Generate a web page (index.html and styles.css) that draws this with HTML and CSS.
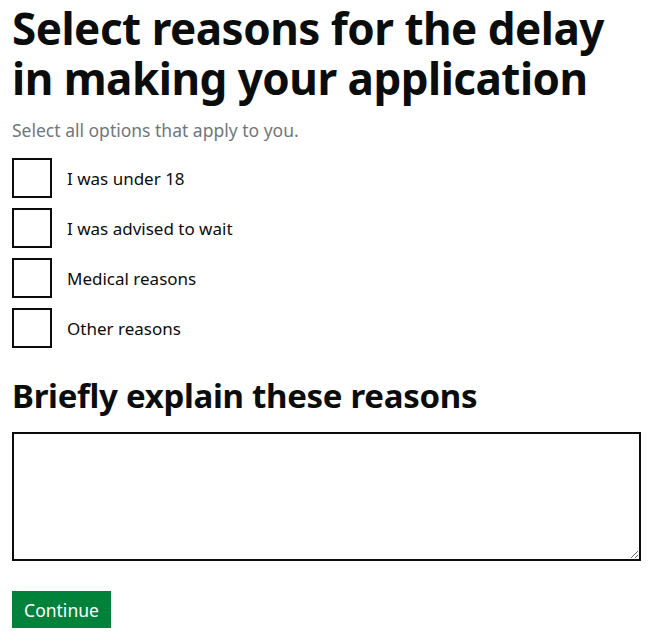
FILE: index.html
```html
<!DOCTYPE html>
<html lang="en">
<head>
    <meta charset="UTF-8">
    <meta name="viewport" content="width=device-width, initial-scale=1.0">
    <title>Reasons for the delay</title>
    <link rel="stylesheet" href="styles.css">
</head>
<body>
    <main class="page">
        <form>
            <div class="form-group">
                <fieldset class="fieldset">
                    <legend class="legend">
                        <h1 class="heading-xl">Select reasons for the delay in making your application</h1>
                    </legend>
                    <div class="hint">Select all options that apply to you.</div>
                    <div class="checkboxes">
                        <div class="checkbox">
                            <input class="checkbox-input" id="reason-1" type="checkbox">
                            <label class="checkbox-label" for="reason-1">I was under 18</label>
                        </div>
                        <div class="checkbox">
                            <input class="checkbox-input" id="reason-2" type="checkbox">
                            <label class="checkbox-label" for="reason-2">I was advised to wait</label>
                        </div>
                        <div class="checkbox">
                            <input class="checkbox-input" id="reason-3" type="checkbox">
                            <label class="checkbox-label" for="reason-3">Medical reasons</label>
                        </div>
                        <div class="checkbox">
                            <input class="checkbox-input" id="reason-4" type="checkbox">
                            <label class="checkbox-label" for="reason-4">Other reasons</label>
                        </div>
                    </div>
                </fieldset>
            </div>

            <div class="form-group">
                <label class="label-l" for="explain">Briefly explain these reasons</label>
                <textarea class="textarea" id="explain" rows="5"></textarea>
            </div>

            <button class="button" type="submit">Continue</button>
        </form>
    </main>
</body>
</html>
```

FILE: styles.css
```css
/* base */
body{
    margin: 0;
    background: #fff;
    color: #0b0c0c;
    font-family: "Noto Sans", Arial, sans-serif;
}

.page{
    width: 629px;
    padding: 0 12px;
}

.form-group{
    margin-bottom: 30px;
}

.fieldset{
    margin: 0;
    padding: 0;
    border: 0;
    min-width: 0;
}

.legend{
    padding: 0;
    margin-bottom: 15px;
}

.heading-xl{
    margin: 0;
    padding-top: 3px;
    font-size: 44px;
    font-weight: 700;
    line-height: 50px;
    letter-spacing: -0.5px;
}

.hint{
    margin-bottom: 15px;
    color: #6f777b;
    font-size: 17.5px;
    line-height: 25px;
}

/* checkboxes */
.checkbox{
    display: flex;
    align-items: center;
    margin-bottom: 10px;
}

.checkbox:last-child{
    margin-bottom: 0;
}

.checkbox-input{
    -webkit-appearance: none;
    appearance: none;
    flex: none;
    width: 40px;
    height: 40px;
    margin: 0;
    border: 2px solid #0b0c0c;
    background: #fff;
    box-sizing: border-box;
}

.checkbox-label{
    padding: 0 15px;
    font-size: 17px;
    line-height: 25px;
}

/* textarea */
.label-l{
    display: block;
    margin-bottom: 18px;
    font-size: 33px;
    font-weight: 700;
    line-height: 36px;
    letter-spacing: -0.3px;
}

.textarea{
    display: block;
    width: 100%;
    height: 129px;
    margin: 0;
    padding: 5px;
    border: 2px solid #0b0c0c;
    border-radius: 0;
    box-sizing: border-box;
    font-family: inherit;
    font-size: 19px;
    resize: vertical;
}

/* button */
.button{
    margin: 0;
    padding: 8px 10px 7px;
    border: 0;
    border-radius: 0;
    background: #00823b;
    box-shadow: 0 3px 0 #003618;
    color: #fff;
    font-family: inherit;
    font-size: 17.5px;
    line-height: 20px;
    width: 99px;
    height: 37px;
    cursor: pointer;
}
```
